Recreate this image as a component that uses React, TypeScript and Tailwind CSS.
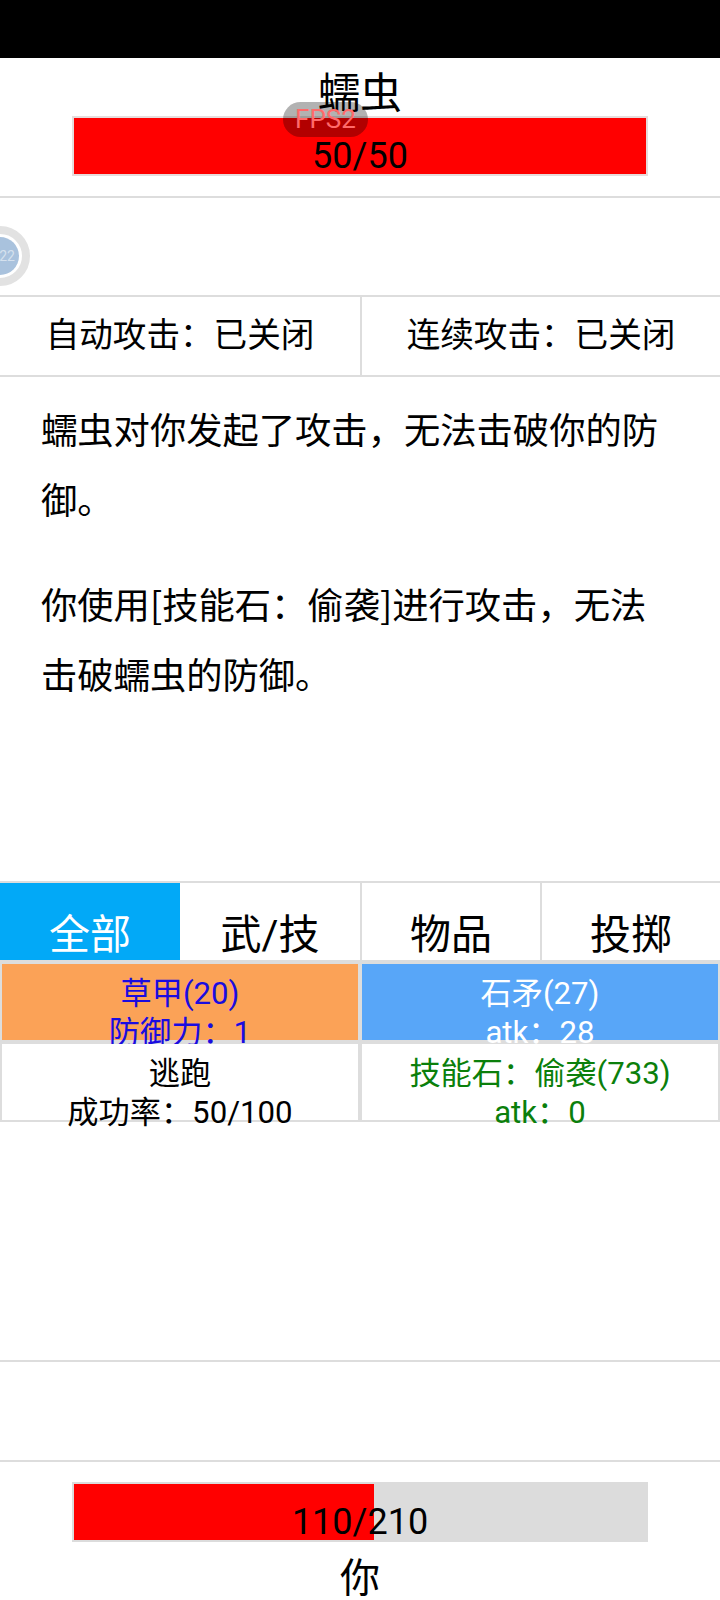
import React from 'react';

const tabs = ['全部', '武/技', '物品', '投掷'];

const items = [
  { name: '草甲(20)', stat: '防御力：1', bg: 'bg-[#fba257]', text: 'text-[#1a0ce0]' },
  { name: '石矛(27)', stat: 'atk：28', bg: 'bg-[#58a6f8]', text: 'text-white' },
  { name: '逃跑', stat: '成功率：50/100', bg: 'bg-white', text: 'text-black' },
  { name: '技能石：偷袭(733)', stat: 'atk：0', bg: 'bg-white', text: 'text-[#0b7f0b]' },
];

export default function App() {
  return (
    <div className="relative h-[1600px] w-[720px] overflow-hidden bg-white font-[family-name:Roboto,'Noto_Sans_CJK_SC',sans-serif] text-black">
      <div className="h-[58px] bg-black" />

      {/* Enemy */}
      <div className="flex h-[140px] flex-col items-center border-b-2 border-[#ddd]">
        <div className="mt-[13px] h-[45px] text-[42px] leading-[45px]">蠕虫</div>
        <div className="flex h-[60px] w-[576px] items-end justify-center border-2 border-[#e6dcdc] bg-[#ff0000] text-[36px] leading-[36px]">
          50/50
        </div>
      </div>

      {/* FPS overlay */}
      <div className="absolute left-[283px] top-[102px] flex h-[35px] w-[85px] items-center justify-center rounded-full bg-black/30 text-[26px] text-[#ff6a6a]">
        FPS2
      </div>

      {/* Buffs */}
      <div className="flex h-[99px] items-start border-b-2 border-[#ddd] pt-[28px]">
        <div className="-ml-[30px] flex h-[60px] w-[60px] items-center justify-center rounded-full border-[8px] border-[#e2e2e2] bg-white p-[3px]">
          <div className="flex h-full w-full items-center justify-center rounded-full bg-[#a9c2dd] pl-[14px] text-[14px] text-[#d5e1ee]">
            22
          </div>
        </div>
      </div>

      {/* Toggles */}
      <div className="flex h-[80px] border-b-2 border-[#ddd] text-[33.6px]">
        <div className="flex w-[362px] items-center justify-center border-r-2 border-[#ddd]">自动攻击：已关闭</div>
        <div className="flex flex-1 items-center justify-center">连续攻击：已关闭</div>
      </div>

      {/* Battle log */}
      <div className="flex h-[504px] flex-col gap-[35px] pl-[41px] pr-[54px] pt-[16px] font-[family-name:'Noto_Sans_CJK_SC',sans-serif] text-[36.3px] leading-[70px]">
        <p>蠕虫对你发起了攻击，无法击破你的防御。</p>
        <p>你使用[技能石：偷袭]进行攻击，无法击破蠕虫的防御。</p>
      </div>

      {/* Tabs */}
      <div className="flex h-[79px] border-t-2 border-[#ddd] text-[41px] leading-[42px]">
        {tabs.map((tab, i) => (
          <div
            key={tab}
            className={`flex w-[180px] items-end justify-center pb-[4px] ${
              i === 0 ? 'bg-[#02a9f7] text-white' : i > 1 ? 'border-l-2 border-[#ddd]' : ''
            }`}
          >
            {tab}
          </div>
        ))}
      </div>

      {/* Actions */}
      <div className="grid h-[162px] grid-cols-2 gap-[4px] bg-[#ddd] px-[2px] pb-[2px] pt-[4px] text-[31.2px] leading-[39px]">
        {items.map((item) => (
          <div key={item.name} className={`h-[76px] pt-[10px] text-center ${item.bg} ${item.text}`}>
            <div>{item.name}</div>
            <div>{item.stat}</div>
          </div>
        ))}
      </div>

      <div className="h-[240px] border-b-2 border-[#ddd]" />
      <div className="h-[100px] border-b-2 border-[#ddd]" />

      {/* Player */}
      <div className="flex flex-col items-center pt-[20px]">
        <div className="relative flex h-[60px] w-[576px] items-end justify-center bg-[#dcdcdc] pb-[2px] text-[36px] leading-[36px]">
          <div className="absolute inset-y-[2px] left-[2px] w-[300px] bg-[#ff0000]" />
          <span className="relative">110/210</span>
        </div>
        <div className="mt-[17px] text-[40px] leading-[40px]">你</div>
      </div>
    </div>
  );
}
